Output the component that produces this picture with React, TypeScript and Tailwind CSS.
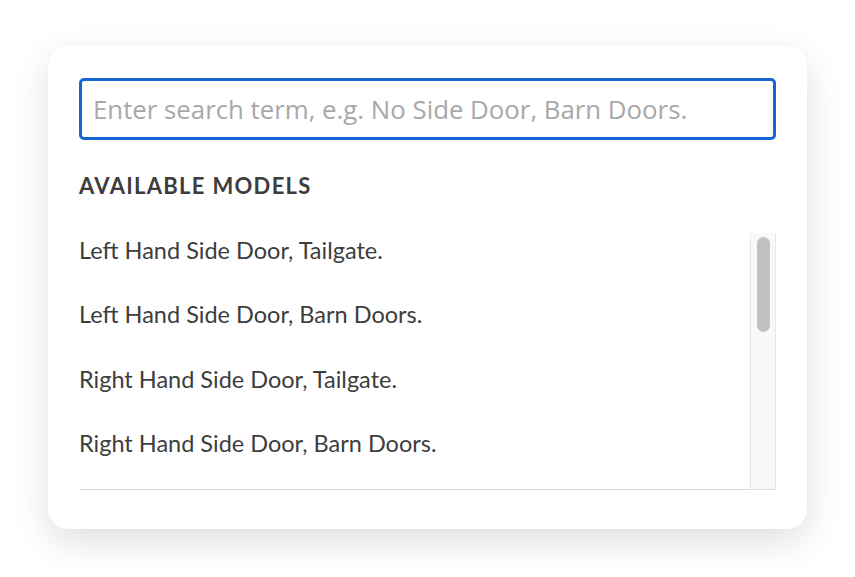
const models: string[] = [
  "Left Hand Side Door, Tailgate.",
  "Left Hand Side Door, Barn Doors.",
  "Right Hand Side Door, Tailgate.",
  "Right Hand Side Door, Barn Doors.",
];

export default function App() {
  return (
    <div className="min-h-screen w-full bg-white pl-[48px] pt-[46px]">
      <div className="w-[759px] h-[483px] rounded-[20px] bg-white px-[31px] pt-[32px] shadow-[0_12px_36px_rgba(0,0,0,0.13)]">
        <input
          type="text"
          placeholder="Enter search term, e.g. No Side Door, Barn Doors."
          className="block w-[697px] h-[62px] rounded-[5px] border-[3px] border-[#1666d1] px-[11px] text-[25.8px] text-[#333] outline-none placeholder:text-[#a8a8a8] font-['Open_Sans',sans-serif]"
        />
        <h2 className="mt-[34px] text-[22px] font-bold tracking-[1.3px] text-[#3d3d3d] leading-6 font-['Lato',sans-serif]">
          AVAILABLE MODELS
        </h2>
        <div className="mt-[35px] flex h-[257px] border-b border-[#dcdcdc]">
          <ul className="flex-1 overflow-hidden">
            {models.map((m) => (
              <li
                key={m}
                className="h-[64.3px] pt-[5px] text-[23.5px] leading-6 text-[#3d3d3d] font-['Lato',sans-serif]"
              >
                {m}
              </li>
            ))}
          </ul>
          <div className="w-[26px] border-x border-[#e8e8e8] bg-[#f8f8f8] px-[6px] pt-[4px]">
            <div className="h-[95px] w-[13px] rounded-full bg-[#c1c1c1]" />
          </div>
        </div>
      </div>
    </div>
  );
}
